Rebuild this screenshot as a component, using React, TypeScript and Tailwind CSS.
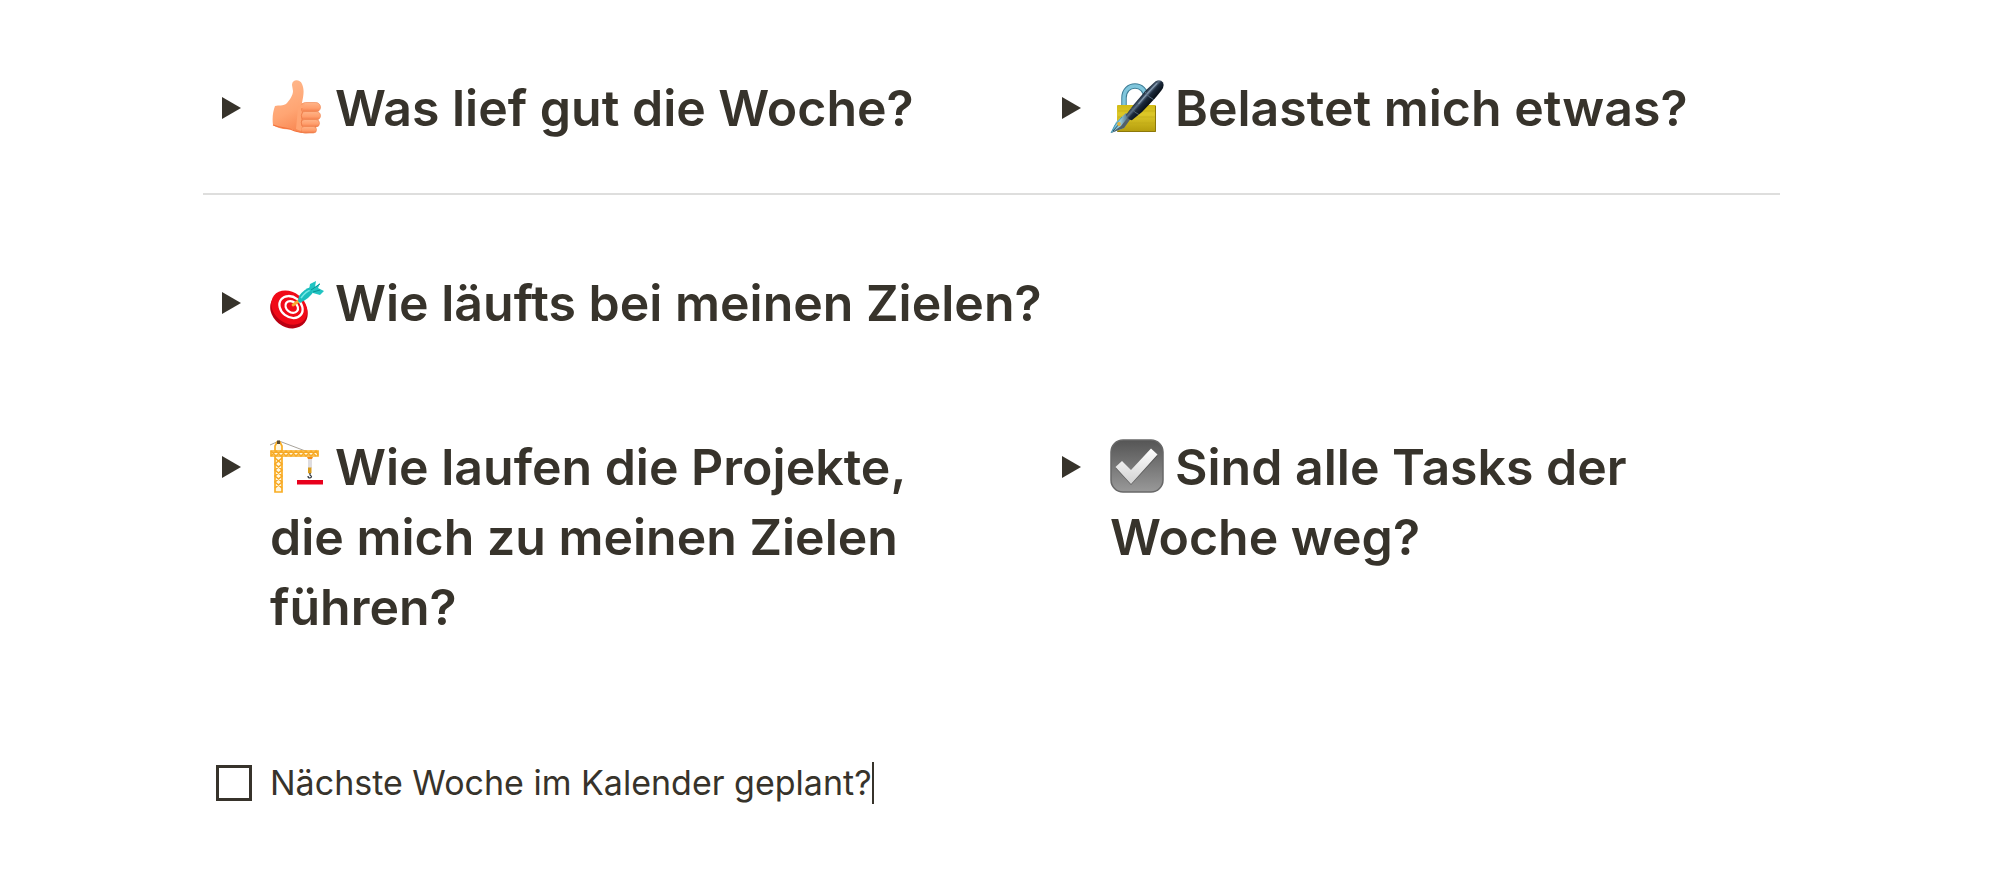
import React, { useState } from "react";
import type { ReactNode } from "react";

const iconClass = "mr-[11px] inline-block size-[54px] align-[-8px]";

function ThumbsUp() {
  return (
    <svg viewBox="0 0 54 54" className={iconClass} aria-hidden="true">
      <defs>
        <linearGradient id="skin" x1="0" y1="0" x2="0.4" y2="1">
          <stop offset="0" stopColor="#ffbb90" />
          <stop offset="0.65" stopColor="#ffa573" />
          <stop offset="1" stopColor="#f98a55" />
        </linearGradient>
        <linearGradient id="finger" x1="0" y1="0" x2="0" y2="1">
          <stop offset="0" stopColor="#ffb488" />
          <stop offset="0.6" stopColor="#ff9e6c" />
          <stop offset="1" stopColor="#f07a48" />
        </linearGradient>
      </defs>
      <path
        d="M5 26C9 25 13 26 16 24C20 20 23 15 23 11L22 5C22 -1 30 -1 32 4C35 11 33 17 32 23L46 25L46 51C38 54 27 53 21 49C14 50 7 48 3 45C2 38 3 31 5 26Z"
        fill="url(#skin)"
      />
      <path d="M3 45Q8 47 15 48Q21 49 25 51Q33 53.500 43 52" fill="none" stroke="#f4733d" strokeWidth="1.2" />
      <rect x="31" y="22.500" width="19.5" height="9.500" rx="4.7" fill="url(#finger)" stroke="#ee7f4a" strokeWidth="0.6" />
      <rect x="31" y="31.500" width="19.5" height="8.5" rx="4.2" fill="url(#finger)" stroke="#ee7f4a" strokeWidth="0.6" />
      <rect x="31" y="39.5" width="18.5" height="7.500" rx="3.700" fill="url(#finger)" stroke="#ee7f4a" strokeWidth="0.6" />
      <rect x="31" y="46.5" width="15.5" height="6.5" rx="3.2" fill="url(#finger)" stroke="#ee7f4a" strokeWidth="0.6" />
      <path d="M28 27Q31 24 35 24Q31 28 33 32Q30 35 32 39Q30 43 32 46L31 51Q28 50 26 49Z" fill="#ffa573" />
      <path d="M32 28Q31 30 32.500 32Q30.500 35 32 39.500Q30.500 42 32 46" fill="none" stroke="#ee7d49" strokeWidth="0.9" />
    </svg>
  );
}

function LockWithPen() {
  return (
    <svg viewBox="0 0 54 54" className={iconClass} aria-hidden="true">
      <defs>
        <linearGradient id="brass" x1="0" y1="0" x2="0" y2="1">
          <stop offset="0" stopColor="#d2bb14" />
          <stop offset="0.35" stopColor="#dcc728" />
          <stop offset="1" stopColor="#b49c0c" />
        </linearGradient>
        <linearGradient id="barrel" x1="0" y1="0" x2="1" y2="0">
          <stop offset="0" stopColor="#142233" />
          <stop offset="0.3" stopColor="#5c7086" />
          <stop offset="0.5" stopColor="#1d2b3d" />
          <stop offset="1" stopColor="#070d16" />
        </linearGradient>
        <linearGradient id="nib" x1="0" y1="0" x2="1" y2="0">
          <stop offset="0" stopColor="#5fb4d0" />
          <stop offset="0.45" stopColor="#9bcfdf" />
          <stop offset="1" stopColor="#384e60" />
        </linearGradient>
      </defs>
      <path d="M14 27V18C14 2 36 2 36 18V27" fill="none" stroke="#3d7d96" strokeWidth="5.5" />
      <path d="M14 27V18C14 2 36 2 36 18V27" fill="none" stroke="#80c6dc" strokeWidth="3.5" />
      <rect x="7" y="25" width="39" height="27" rx="1" fill="url(#brass)" />
      <path d="M8 31H45M8 37H45M8 43H45" stroke="#c0a817" strokeWidth="0.6" />
      <path d="M7.500 51.500H45.500V26" fill="none" stroke="#8d7809" />
      <path d="M1 53L6 42L16 33L21 38L14 48Z" fill="url(#nib)" />
      <path d="M1 53L5 45L12 37" fill="none" stroke="#479bb8" />
      <path d="M1 53L14 48L21 38L19 36L11 46Z" fill="#52616c" />
      <path d="M3 51L10 43" stroke="#234356" strokeWidth="0.900" />
      <circle cx="9" cy="44" r="1.900" fill="#e2b33a" />
      <g transform="translate(52 1.500) rotate(42)">
        <path d="M-4.500 49L-5.500 36L-6 17L-5 4Q-3 -1 1 0Q5 1 5.500 7L6 17L5.500 36L3.500 49Q0 51 -4.500 49Z" fill="url(#barrel)" />
        <path d="M-2.500 5Q-3 15 -2.500 32" fill="none" stroke="#8397ac" strokeWidth="1.200" strokeLinecap="round" />
        <path d="M-6 19Q0 21 6 19" fill="none" stroke="#5c7186" strokeWidth="0.900" />
        <path d="M-5 40Q0 42 5 40" fill="none" stroke="#576978" strokeWidth="0.800" />
      </g>
    </svg>
  );
}

function Target() {
  return (
    <svg viewBox="0 0 54 54" className={iconClass} aria-hidden="true">
      <g transform="rotate(38 19 33)">
        <ellipse cx="20.500" cy="35" rx="20" ry="16.500" fill="#b90012" />
        <ellipse cx="19" cy="32.500" rx="19.500" ry="15.500" fill="#f00a18" />
        <ellipse cx="20" cy="31" rx="12.500" ry="10" fill="none" stroke="#fff" strokeWidth="2.300" />
        <ellipse cx="20.500" cy="30.500" rx="6.800" ry="5.300" fill="none" stroke="#fff" strokeWidth="2.200" />
      </g>
      <path d="M23 30L30 25" stroke="#f9a832" strokeWidth="2.800" strokeLinecap="round" />
      <path d="M28 26L29 21Q34 14 41 12L44 16Q40 23 30 28Z" fill="#1bbdbd" />
      <path d="M31 23Q36 16 41 15" fill="none" stroke="#72e8e5" strokeWidth="1.500" />
      <path d="M39 15L40 9L46 6L45 12L50 8L48 13L54 16L50 20L43 18Z" fill="#21c4c2" />
      <path d="M41 15L50 9M43 17L50 15" stroke="#078c91" strokeWidth="0.900" />
    </svg>
  );
}

function Crane() {
  return (
    <svg viewBox="0 0 54 54" className={iconClass} aria-hidden="true">
      <path d="M0 6L9 2L38 13" fill="none" stroke="#827b70" strokeWidth="0.700" />
      <g fill="#fff7df" stroke="#f9ad24" strokeWidth="1.700">
        <path d="M5 53V7L7 3H10L12 7V53Z" />
        <path d="M1 12H48V17H1Z" />
      </g>
      <path
        d="M5 19L12 25L5 31L12 37L5 43L12 49M12 19L5 25L12 31L5 37L12 43L5 49M1 17L6 12L11 17L16 12L21 17L26 12L31 17L36 12L41 17L46 12L48 16M1 12L6 17L11 12L16 17L21 12L26 17L31 12L36 17L41 12L46 17"
        fill="none"
        stroke="#f7a925"
        strokeWidth="1.500"
      />
      <rect x="7" y="1.500" width="3" height="3.500" fill="#5b4a2c" />
      <path d="M37 18H43L42 20H38Z" fill="#f38d17" />
      <path d="M39 20V29M41 20V29" stroke="#a29ba4" strokeWidth="0.700" />
      <path d="M38 28.500H41.500V34L40 35L38 34Z" fill="#d99c1c" />
      <path d="M40 34V36Q43 38 40 39Q38 39 38 37" fill="none" stroke="#313841" strokeWidth="1.200" />
      <rect x="27" y="41" width="26" height="4.500" fill="#e8001c" />
    </svg>
  );
}

function CheckedBox() {
  return (
    <svg viewBox="0 0 54 54" className={iconClass} aria-hidden="true">
      <defs>
        <linearGradient id="tile" x1="0" y1="0" x2="0" y2="1">
          <stop offset="0" stopColor="#555" />
          <stop offset="1" stopColor="#999" />
        </linearGradient>
        <linearGradient id="tick" x1="0" y1="0" x2="0" y2="1">
          <stop offset="0" stopColor="#fff" />
          <stop offset="1" stopColor="#d2d2d2" />
        </linearGradient>
      </defs>
      <rect x="1" y="1" width="52" height="52" rx="12" fill="url(#tile)" stroke="#686868" strokeWidth="1.500" />
      <path d="M5.500 29L12 23L21 32L41 11L47.500 17L21 46Z" fill="#444" opacity="0.600" />
      <path d="M5.500 28L12 22L21 31L41 9.500L47.500 15.500L21 45Z" fill="url(#tick)" />
    </svg>
  );
}

function Toggle({ icon, children }: { icon: ReactNode; children: string }) {
  const [open, setOpen] = useState(false);
  return (
    <div className="flex min-w-0 items-start pl-3">
      <button
        type="button"
        aria-label={children}
        aria-expanded={open}
        onClick={() => setOpen(!open)}
        className="flex h-[70px] w-[55px] shrink-0 items-center pl-[7px]"
      >
        <svg viewBox="0 0 20 22" className={open ? "h-[22px] w-5 rotate-90" : "h-[22px] w-5"} aria-hidden="true">
          <path d="M0 0L19 11L0 22Z" fill="#37332b" />
        </svg>
      </button>
      <h2 className="min-w-0 text-[50px] leading-[70px] font-semibold">
        {icon}
        {children}
      </h2>
    </div>
  );
}

export default function App() {
  return (
    <main className="bg-white pt-[73px] pr-[220px] pb-[75px] pl-[203px] font-['Inter',sans-serif] text-[#37332b]">
      <section className="grid grid-cols-2 gap-x-[103px]">
        <Toggle icon={<ThumbsUp />}>Was lief gut die Woche?</Toggle>
        <Toggle icon={<LockWithPen />}>Belastet mich etwas?</Toggle>
      </section>
      <hr className="mt-[50px] border-t-2 border-[#dededd]" />
      <section className="mt-[73px]">
        <Toggle icon={<Target />}>Wie läufts bei meinen Zielen?</Toggle>
      </section>
      <section className="mt-[94px] grid grid-cols-2 gap-x-[103px]">
        <Toggle icon={<Crane />}>Wie laufen die Projekte, die mich zu meinen Zielen führen?</Toggle>
        <Toggle icon={<CheckedBox />}>Sind alle Tasks der Woche weg?</Toggle>
      </section>
      <label className="mt-[120px] flex items-center pl-[13px] text-[34px] leading-[42px]">
        <input type="checkbox" className="mr-[18px] size-9 shrink-0 appearance-none border-3 border-[#37332b] checked:bg-[#37332b]" />
        <span className="border-r-2 border-[#37332b]">Nächste Woche im Kalender geplant?</span>
      </label>
    </main>
  );
}
